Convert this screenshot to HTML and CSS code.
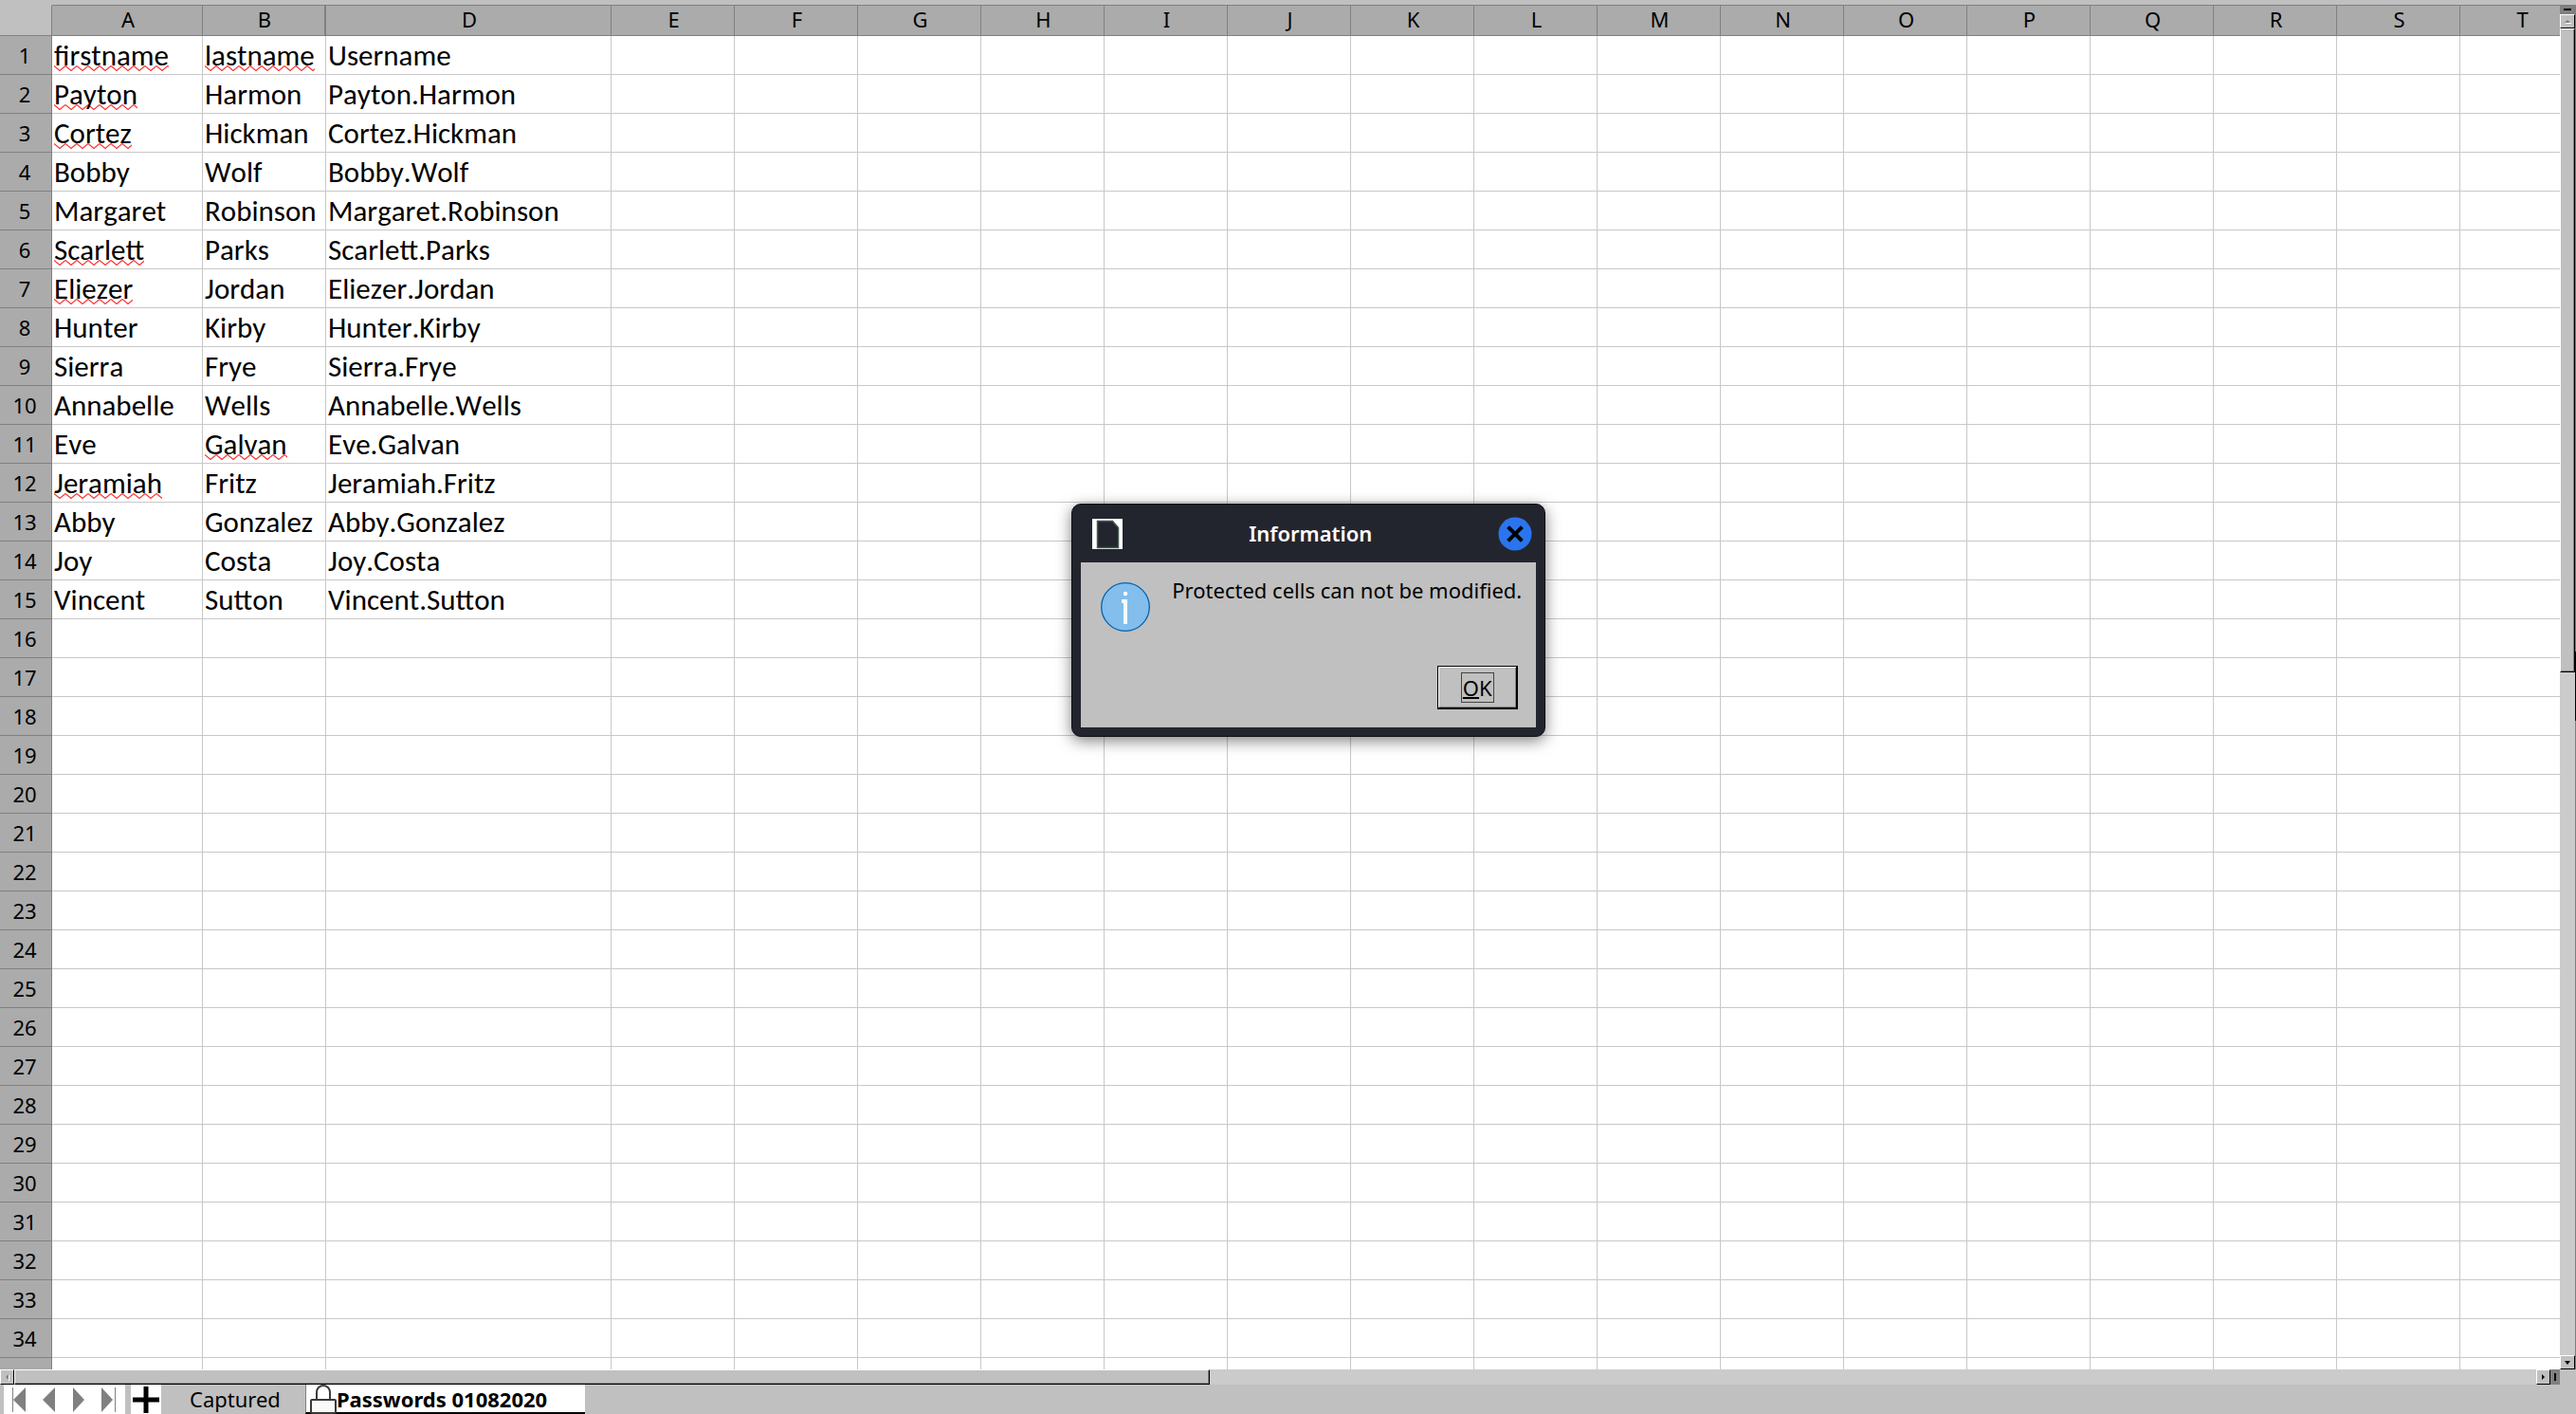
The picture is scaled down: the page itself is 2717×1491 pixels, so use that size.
FILE: index.html
```html
<!DOCTYPE html>
<html lang="en">
<head>
    <meta charset="UTF-8">
    <meta name="viewport" content="width=device-width, initial-scale=1.0">
    <title>Passwords 01082020</title>
    <link rel="stylesheet" href="styles.css">
</head>
<body>
    <main class="workspace">
        <div class="sheet">
            <table class="grid">
                <colgroup id="cols"></colgroup>
                <thead><tr id="letters"></tr></thead>
                <tbody id="rows"></tbody>
            </table>
        </div>
        <div class="vscroll">
            <div class="split split-v"></div>
            <button class="arrow" aria-label="Scroll up"><svg width="7" height="4" viewBox="0 0 7 4"><path d="M0 3h6L3 0z" fill="#808080"/><path d="M1 3.500h6" stroke="#fff"/></svg></button>
            <div class="vtrack"><div class="vthumb"></div></div>
            <button class="arrow" aria-label="Scroll down"><svg width="7" height="4" viewBox="0 0 7 4"><path d="M0 0h6L3 4z" fill="#000"/></svg></button>
        </div>
        <div class="edge"></div>
    </main>

    <div class="hscroll">
        <button class="arrow" aria-label="Scroll left"><svg width="4" height="7" viewBox="0 0 4 7"><path d="M3 0v6L0 3z" fill="#808080"/><path d="M3.500 1v6" stroke="#fff"/></svg></button>
        <div class="htrack"><div class="hthumb"></div></div>
        <button class="arrow" aria-label="Scroll right"><svg width="4" height="7" viewBox="0 0 4 7"><path d="M0 0v6l3-3z" fill="#000"/></svg></button>
        <div class="split split-h"></div>
    </div>

    <nav class="tabs">
        <div class="tab-nav">
            <button aria-label="First sheet"><svg width="15" height="28" viewBox="0 0 15 28"><path d="M.5 1v26" stroke="#808080"/><path d="M14 1v26L1 14z" fill="#808080"/></svg></button>
            <button aria-label="Previous sheet"><svg width="15" height="28" viewBox="0 0 15 28"><path d="M14 1v26L1 14z" fill="#808080"/></svg></button>
            <button aria-label="Next sheet"><svg width="15" height="28" viewBox="0 0 15 28"><path d="M1 1v26l12-13z" fill="#808080"/></svg></button>
            <button aria-label="Last sheet"><svg width="15" height="28" viewBox="0 0 15 28"><path d="M0 1v26l12-13z" fill="#808080"/><path d="M14.500 1v26" stroke="#808080"/></svg></button>
        </div>
        <button class="add" aria-label="Add sheet"><svg width="28" height="28" viewBox="0 0 28 28"><path d="M14 0v28M0 14h28" stroke="#000" stroke-width="5"/></svg></button>
        <button class="tab">Captured</button>
        <button class="tab active"><svg width="28" height="31" viewBox="0 0 28 31"><path d="M7 16V8a7 7 0 0 1 14 0v8" fill="none" stroke="#3a3a38" stroke-width="2"/><rect x="1" y="16" width="26" height="14" rx="1" fill="#fafafa" stroke="#3a3a38" stroke-width="2"/></svg>Passwords 01082020</button>
    </nav>

    <div class="dialog" role="dialog" aria-labelledby="dialog-title">
        <div class="titlebar">
            <svg class="doc" width="32" height="32" viewBox="0 0 32 32"><path d="M0 0h32v32H0z" fill="#fff"/><path d="M5.500 2.500h16l6 7v21h-22z" fill="#23252e" stroke="#42584f" stroke-width="1.500"/></svg>
            <h2 id="dialog-title">Information</h2>
            <button class="close" aria-label="Close"><svg width="36" height="36" viewBox="0 0 36 36"><circle cx="18" cy="18" r="17.500" fill="#2a75ee"/><path d="M12 12l12 12M24 12l-12 12" stroke="#000" stroke-width="4" stroke-linecap="square"/></svg></button>
        </div>
        <div class="content">
            <div class="message">
                <svg width="52" height="52" viewBox="0 0 52 52"><circle cx="26" cy="26" r="25.300" fill="#83beec" stroke="#0063b1" stroke-width="1.300"/><circle cx="26" cy="12" r="2.200" fill="#fff"/><path d="M22 18h6v26h-4V22h-2z" fill="#fafafa"/></svg>
                <p>Protected cells can not be modified.</p>
            </div>
            <button class="ok"><span><u>O</u>K</span></button>
        </div>
    </div>
    <script src="sheet.js"></script>
</body>
</html>
```
FILE: styles.css
```css
* {
    box-sizing: border-box;
}
body {
    margin: 0;
    height: 100vh;
    padding-top: 5px;
    display: flex;
    flex-direction: column;
    overflow: hidden;
    background: #c0c0c0;
    color: #000;
    font-family: "Noto Sans", sans-serif;
    font-size: 22px;
}
button {
    margin: 0;
    padding: 0;
    border: 0;
    background: none;
    color: inherit;
    font: inherit;
}
svg {
    display: block;
    flex: none;
}

/* cells */
.workspace {
    flex: 1;
    min-height: 0;
    display: flex;
}
.sheet {
    flex: 1;
    min-width: 0;
    overflow: hidden;
    background: #fff;
}
.grid {
    width: max-content;
    table-layout: fixed;
    border-collapse: separate;
    border-spacing: 0;
}
.col-head { width: 55px; }
.col-a { width: 159px; }
.col-d { width: 301px; }
.col { width: 130px; }
.grid th {
    padding: 0;
    background: #ababab;
    border-right: 1px solid #808080;
    border-bottom: 1px solid #808080;
    font-weight: normal;
    line-height: 30px;
}
.grid thead th {
    height: 33px;
    padding-left: 2px;
    border-top: 1px solid #808080;
    line-height: 28px;
    vertical-align: top;
}
.grid thead th:first-child {
    background: #c0c0c0;
    border-top-color: #c0c0c0;
}
.grid thead th.before-hidden {
    border-right-width: 2px;
}
.grid tbody th {
    height: 41px;
    padding-right: 2px;
}
.grid td {
    padding: 0 0 0 2px;
    border-right: 1px solid #c8c8c8;
    border-bottom: 1px solid #c8c8c8;
    font-family: Carlito, Lato, sans-serif;
    font-size: 31px;
    font-kerning: none;
    line-height: 40px;
    white-space: nowrap;
}
.misspelled {
    padding-bottom: 1px;
    background: url("data:image/svg+xml,%3Csvg xmlns='http://www.w3.org/2000/svg' width='12' height='6'%3E%3Cpath d='M0 .5L6 5.500L12 .5' fill='none' stroke='%23ff3030' stroke-width='1.200'/%3E%3C/svg%3E") repeat-x left bottom 3px;
}

/* scrollbars */
.arrow {
    flex: none;
    width: 15px;
    height: 15px;
    display: flex;
    align-items: center;
    justify-content: center;
    background: #c0c0c0;
    border: 1px solid #000;
    border-top-color: #fff;
    border-left-color: #fff;
}
.vscroll {
    width: 16px;
    display: flex;
    flex-direction: column;
    background: #cbcbcb;
}
.vscroll .arrow {
    width: 16px;
}
.split {
    display: flex;
    flex: none;
    align-items: center;
    justify-content: center;
    background: #808080;
}
.split-v { height: 10px; }
.split-v::before {
    content: "";
    width: 8px;
    height: 2px;
    background: #000;
}
.split-h { width: 10px; }
.split-h::before {
    content: "";
    width: 2px;
    height: 8px;
    background: #000;
}
.vtrack,
.htrack {
    flex: 1;
    background: #cbcbcb;
}
.vthumb,
.hthumb {
    background: #c0c0c0;
    border: 1px solid #000;
    border-top-color: #fff;
    border-left-color: #fff;
    box-shadow: inset -1px -1px #808080;
}
.vthumb { height: 48.500%; }
.hthumb {
    width: 47.400%;
    height: 16px;
}
.edge {
    width: 1px;
    background: linear-gradient(#808080 47.400%, #000 47.400% 52.500%, #808080 52.500%);
}
.hscroll {
    height: 16px;
    display: flex;
    padding-right: 17px;
}
.hscroll .arrow {
    height: 16px;
}

/* sheet tabs */
.tabs {
    height: 31px;
    display: flex;
    padding-left: 4px;
}
.tab-nav {
    width: 128px;
    display: flex;
    align-items: center;
    justify-content: space-between;
    padding: 0 10px 0 9px;
    background: #fff;
}
.add {
    width: 32px;
    margin-left: 6px;
    display: flex;
    align-items: center;
    justify-content: center;
    background: #fff;
}
.tab {
    padding: 0 26px 0 30px;
    line-height: 31px;
}
.tab.active {
    display: flex;
    padding: 0 40px 0 4px;
    background: #fff;
    border-bottom: 2px solid #000;
    border-left: 1px solid #808080;
    font-weight: bold;
}

/* message box */
.dialog {
    position: absolute;
    top: 531px;
    left: 41.600%;
    width: 500px;
    border: 1px solid #0e0f14;
    border-radius: 10px;
    padding: 0 9px 9px;
    background: #23252e;
    box-shadow: 0 4px 16px rgba(0, 0, 0, 0.5);
}
.titlebar {
    height: 61px;
    display: flex;
    align-items: center;
    justify-content: space-between;
    padding: 0 4px 0 12px;
    color: #fff;
}
.titlebar h2 {
    margin: 0;
    padding-bottom: 2px;
    font-size: 22px;
    font-weight: 600;
}
.content {
    height: 174px;
    display: flex;
    flex-direction: column;
    justify-content: space-between;
    padding: 15px 15px 19px 21px;
    background: #c0c0c0;
}
.message {
    display: flex;
    justify-content: space-between;
}
.message svg {
    margin-top: 6px;
}
.message p {
    margin: 0;
    line-height: 28px;
}
.ok {
    align-self: flex-end;
    width: 85px;
    height: 46px;
    margin-right: 4px;
    border: 1px solid #000;
    border-right-width: 2px;
    border-bottom-width: 2px;
    box-shadow: inset 1px 1px #fff, inset -1px -1px #808080;
}
.ok span {
    display: inline-block;
    padding: 0 1px;
    border: 1px solid #444;
    line-height: 30px;
}
.ok u {
    text-decoration-thickness: 2px;
}
```
FILE: sheet.js
```js
const letters = ['A', 'B', 'D', ...'EFGHIJKLMNOPQRST'];
const people = [
    ['firstname', 'lastname', 'Username'],
    ['Payton', 'Harmon'],
    ['Cortez', 'Hickman'],
    ['Bobby', 'Wolf'],
    ['Margaret', 'Robinson'],
    ['Scarlett', 'Parks'],
    ['Eliezer', 'Jordan'],
    ['Hunter', 'Kirby'],
    ['Sierra', 'Frye'],
    ['Annabelle', 'Wells'],
    ['Eve', 'Galvan'],
    ['Jeramiah', 'Fritz'],
    ['Abby', 'Gonzalez'],
    ['Joy', 'Costa'],
    ['Vincent', 'Sutton']
];
const misspelled = ['firstname', 'lastname', 'Payton', 'Cortez', 'Scarlett', 'Eliezer', 'Galvan', 'Jeramiah'];
const colClass = { A: 'col-a', D: 'col-d' };
const fullRows = 34;

document.getElementById('cols').innerHTML = '<col class="col-head">' +
    letters.map(l => `<col class="${colClass[l] || 'col'}">`).join('');

// column C is hidden, so B gets the thick border
document.getElementById('letters').innerHTML = '<th></th>' +
    letters.map(l => `<th scope="col"${l === 'B' ? ' class="before-hidden"' : ''}>${l}</th>`).join('');

let html = '';
// the last row is cut by the scrollbar and has no number
for (let row = 1; row <= fullRows + 1; row++) {
    const person = people[row - 1] || [];
    html += `<tr><th scope="row">${row > fullRows ? '' : row}</th>`;
    letters.forEach((letter, i) => {
        let text = person[i] || '';
        if (letter === 'D' && person.length === 2) {
            text = person.join('.');
        }
        html += misspelled.includes(text) ? `<td><span class="misspelled">${text}</span></td>` : `<td>${text}</td>`;
    });
    html += '</tr>';
}
document.getElementById('rows').innerHTML = html;
```
